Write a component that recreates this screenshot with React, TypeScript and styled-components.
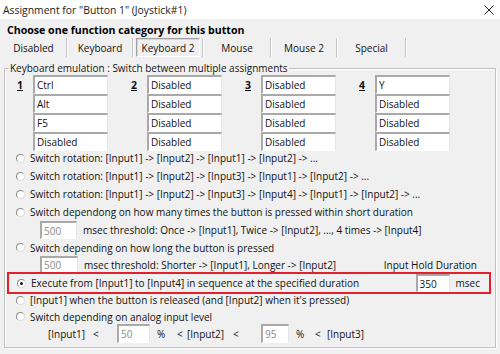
import React from 'react';
import styled, { createGlobalStyle, css } from 'styled-components';

const Global = createGlobalStyle`
  html, body { margin: 0; padding: 0; background: #f0f0f0; }
  body { font-family: "Open Sans", "Noto Sans", sans-serif; }
`;

const Window = styled.div`
  width: 500px;
  height: 354px;
  background: #f0f0f0;
  overflow: hidden;
  font-family: "Open Sans", "Noto Sans", sans-serif;
  font-size: 10px;
  color: #111;
`;

const TitleBar = styled.div`
  height: 19px;
  background: #fff;
  display: flex;
  align-items: center;
  justify-content: space-between;
  padding: 0 6px 0 3px;
  font-size: 10.4px;
  color: #222;
`;

const Heading = styled.div`
  padding: 4px 0 0 7px;
  height: 15px;
  line-height: 15px;
  font-weight: 700;
  font-size: 10.6px;
  color: #000;
`;

const TabRow = styled.div`
  display: flex;
  height: 19px;
  padding-left: 1px;
`;

const Tab = styled.div<{ $w: number }>`
  width: ${p => p.$w}px;
  display: flex;
  align-items: center;
  justify-content: center;
  border-right: 1px solid #c4c4c4;
  box-shadow: 1px 0 0 #fff;
  margin-right: 1px;
  font-size: 10px;
`;

const SelectedTab = styled.span`
  display: flex;
  align-items: center;
  height: 19px;
  box-sizing: border-box;
  padding: 0 5px;
  border: 1px solid;
  border-color: #a0a0a0 #fff #fff #a0a0a0;
  box-shadow: inset 1px 1px 0 #d8d8d8;
`;

const Group = styled.fieldset`
  margin: 4px 4px 0 4px;
  padding: 0;
  height: 287px;
  box-sizing: border-box;
  border: 1px solid #c0c0c0;
  box-shadow: inset 1px 1px 0 #fff, 1px 1px 0 #fff;
`;

const Legend = styled.legend`
  margin-left: 4px;
  padding: 0 1px;
  line-height: 14px;
  font-size: 10px;
`;

const Content = styled.div`
  padding-left: 11px;
  display: flex;
  flex-direction: column;
`;

const AssignGrid = styled.div`
  display: flex;
  gap: 23px;
  margin-left: 1px;
`;

const AssignCol = styled.div`
  display: flex;
`;

const Num = styled.span`
  width: 16px;
  line-height: 20px;
  font-weight: 700;
  text-decoration: underline;
  font-size: 10.5px;
`;

const Stack = styled.div`
  display: flex;
  flex-direction: column;
  width: 75px;
`;

const Field = styled.div<{ $w?: number; $h?: number; $dim?: boolean }>`
  width: ${p => (p.$w ? `${p.$w}px` : '100%')};
  height: ${p => p.$h ?? 19}px;
  box-sizing: border-box;
  flex: none;
  background: #fff;
  border-style: solid;
  border-width: 2px 1px 1px 2px;
  border-color: #a9a9a9 #e6e6e6 #fff #a9a9a9;
  padding-left: 2px;
  display: flex;
  align-items: center;
  font-size: 10px;
  color: ${p => (p.$dim ? '#8a8a8a' : '#111')};
`;

const Option = styled.div<{ $h?: number; $mt?: number }>`
  display: flex;
  align-items: center;
  gap: 5px;
  height: ${p => p.$h ?? 18}px;
  margin-top: ${p => p.$mt ?? 0}px;
  font-size: 10px;
`;

const Radio = styled.span<{ $on?: boolean }>`
  width: 9px;
  height: 9px;
  flex: none;
  box-sizing: border-box;
  border-radius: 50%;
  border: 1px solid;
  border-color: #8a8a8a #dcdcdc #dcdcdc #8a8a8a;
  background: #fff;
  position: relative;
  ${p =>
    p.$on &&
    css`
      &::after {
        content: '';
        position: absolute;
        left: 2px;
        top: 2px;
        width: 3px;
        height: 3px;
        border-radius: 50%;
        background: #111;
      }
    `}
`;

const SubRow = styled.div<{ $h?: number; $mt?: number; $pl?: number; $gap?: number }>`
  display: flex;
  align-items: center;
  height: ${p => p.$h ?? 18}px;
  margin-top: ${p => p.$mt ?? 0}px;
  padding-left: ${p => p.$pl ?? 24}px;
  gap: ${p => p.$gap ?? 6}px;
  font-size: 10px;
`;

const RightNote = styled.span`
  margin-left: auto;
  margin-right: 18px;
`;

const Highlight = styled.div`
  display: flex;
  align-items: center;
  gap: 5px;
  height: 22px;
  box-sizing: border-box;
  margin: -1px 4px 0 -9px;
  padding-left: 8px;
  border: 2px solid #e3202b;
  font-size: 10px;
`;

const Duration = styled.div`
  margin-left: auto;
  display: flex;
  align-items: center;
  gap: 6px;
  padding-right: 9px;
`;

const Slot = styled.span<{ $w: number; $ml?: number }>`
  width: ${p => p.$w}px;
  margin-left: ${p => p.$ml ?? 0}px;
  flex: none;
  display: flex;
  align-items: center;
`;

const Close = () => (
  <svg width="10" height="10" viewBox="0 0 10 10">
    <path d="M0.5 0.5 L9.5 9.5 M9.5 0.5 L0.5 9.5" stroke="#222" strokeWidth="1" />
  </svg>
);

const cols = [
  ['Ctrl', 'Alt', 'F5', 'Disabled'],
  ['Disabled', 'Disabled', 'Disabled', 'Disabled'],
  ['Disabled', 'Disabled', 'Disabled', 'Disabled'],
  ['Y', 'Disabled', 'Disabled', 'Disabled'],
];

const tabs: { label: string; w: number; sel?: boolean }[] = [
  { label: 'Disabled', w: 65 },
  { label: 'Keyboard', w: 64 },
  { label: 'Keyboard 2', w: 68, sel: true },
  { label: 'Mouse', w: 66 },
  { label: 'Mouse 2', w: 64 },
  { label: 'Special', w: 67 },
];

export default function App() {
  return (
    <Window>
      <Global />
      <TitleBar>
        <span>Assignment for "Button 1" (Joystick#1)</span>
        <Close />
      </TitleBar>
      <Heading>Choose one function category for this button</Heading>
      <TabRow>
        {tabs.map(t => (
          <Tab key={t.label} $w={t.w}>
            {t.sel ? <SelectedTab>{t.label}</SelectedTab> : t.label}
          </Tab>
        ))}
      </TabRow>
      <Group>
        <Legend>Keyboard emulation : Switch between multiple assignments</Legend>
        <Content>
          <AssignGrid>
            {cols.map((c, i) => (
              <AssignCol key={i}>
                <Num>{i + 1}</Num>
                <Stack>
                  {c.map((v, j) => (
                    <Field key={j}>{v}</Field>
                  ))}
                </Stack>
              </AssignCol>
            ))}
          </AssignGrid>
          <Option $mt={-2}>
            <Radio />
            Switch rotation: [Input1] -&gt; [Input2] -&gt; [Input1] -&gt; [Input2] -&gt; ...
          </Option>
          <Option>
            <Radio />
            Switch rotation: [Input1] -&gt; [Input2] -&gt; [Input3] -&gt; [Input1] -&gt; [Input2] -&gt; ...
          </Option>
          <Option>
            <Radio />
            Switch rotation: [Input1] -&gt; [Input2] -&gt; [Input3] -&gt; [Input4] -&gt; [Input1] -&gt; [Input2] -&gt; ...
          </Option>
          <Option>
            <Radio />
            Switch dependong on how many times the button is pressed within short duration
          </Option>
          <SubRow>
            <Field $w={37} $h={18} $dim>500</Field>
            msec threshold: Once -&gt; [Input1], Twice -&gt; [Input2], ..., 4 times -&gt; [Input4]
          </SubRow>
          <Option $h={17}>
            <Radio />
            Switch depending on how long the button is pressed
          </Option>
          <SubRow $h={17}>
            <Field $w={38} $h={17} $dim>500</Field>
            msec threshold: Shorter -&gt; [Input1], Longer -&gt; [Input2]
            <RightNote>Input Hold Duration</RightNote>
          </SubRow>
          <Highlight>
            <Radio $on />
            Execute from [Input1] to [Input4] in sequence at the specified duration
            <Duration>
              <Field $w={34} $h={18}>350</Field>
              msec
            </Duration>
          </Highlight>
          <Option $h={16} $mt={-2}>
            <Radio />
            [Input1] when the button is released (and [Input2] when it's pressed)
          </Option>
          <Option $h={17}>
            <Radio />
            Switch depending on analog input level
          </Option>
          <SubRow $h={19} $mt={-1} $pl={32} $gap={0}>
            <Slot $w={45}>[Input1]</Slot>
            <Slot $w={24}>&lt;</Slot>
            <Field $w={33} $h={19} $dim>50</Field>
            <Slot $w={20} $ml={7}>%</Slot>
            <Slot $w={10}>&lt;</Slot>
            <Slot $w={46}>[Input2]</Slot>
            <Slot $w={28}>&lt;</Slot>
            <Field $w={28} $h={19} $dim>95</Field>
            <Slot $w={19} $ml={7}>%</Slot>
            <Slot $w={12}>&lt;</Slot>
            <Slot $w={40}>[Input3]</Slot>
          </SubRow>
        </Content>
      </Group>
    </Window>
  );
}
